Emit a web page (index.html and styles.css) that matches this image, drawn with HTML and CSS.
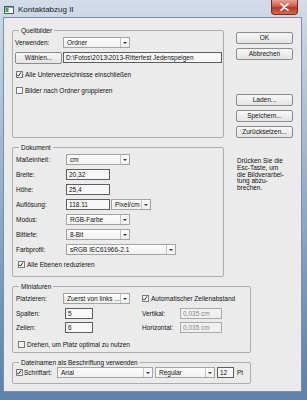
FILE: index.html
```html
<!DOCTYPE html>
<html lang="de">
<head>
<meta charset="utf-8">
<title>Kontaktabzug II</title>
<link rel="stylesheet" href="styles.css">
</head>
<body>
<div class="window">
  <div class="titlebar">
    <svg class="appicon" width="10" height="8" viewBox="0 0 10 8">
      <rect x="0.5" y="0.5" width="9" height="7" fill="#f4f6f4" stroke="#4a5a55"/>
      <rect x="1.5" y="2" width="3" height="4" fill="#3aa35a"/>
      <rect x="1" y="1" width="8" height="1" fill="#8aa0b8"/>
    </svg>
    <span class="title">Kontaktabzug II</span>
    <div class="closebtn">
      <svg width="9" height="8" viewBox="0 0 9 8"><path d="M1.2 0.8 L7.8 7.2 M7.8 0.8 L1.2 7.2" stroke="#fff" stroke-width="1.8" stroke-linecap="round"/></svg>
    </div>
  </div>
  <div class="client">
    <div class="top">
      <div class="leftcol">
        <fieldset class="grp g-quell">
          <legend>Quellbilder</legend>
          <div class="gbody">
            <div class="row">
              <span class="lbl w48">Verwenden:</span>
              <div class="select w67"><span class="val">Ordner</span><span class="arrow"></span></div>
            </div>
            <div class="row mt4">
              <div class="btn w47">Wählen...</div>
              <div class="input path">D:\Fotos\2013\2013-Ritterfest Jedenspeigen</div>
            </div>
            <div class="row mt6 ind1">
              <span class="cb on"><svg width="7" height="7" viewBox="0 0 7 7"><path d="M1.2 3.6 L2.8 5.4 L5.9 1" fill="none" stroke="#222" stroke-width="1.1"/></svg></span>
              <span class="cbtext">Alle Unterverzeichnisse einschließen</span>
            </div>
            <div class="row mt5 ind1">
              <span class="cb"></span>
              <span class="cbtext">Bilder nach Ordner gruppieren</span>
            </div>
          </div>
        </fieldset>
        <fieldset class="grp g-doc">
          <legend>Dokument</legend>
          <div class="gbody doc">
            <div class="row"><span class="lbl w50">Maßeinheit:</span><div class="select w64"><span class="val">cm</span><span class="arrow"></span></div></div>
            <div class="row"><span class="lbl w50">Breite:</span><div class="input w44">20,32</div></div>
            <div class="row"><span class="lbl w50">Höhe:</span><div class="input w44">25,4</div></div>
            <div class="row"><span class="lbl w50">Auflösung:</span><div class="input w44">118.11</div><div class="select w40 ml1"><span class="val">Pixel/cm</span><span class="arrow"></span></div></div>
            <div class="row"><span class="lbl w50">Modus:</span><div class="select w64"><span class="val">RGB-Farbe</span><span class="arrow"></span></div></div>
            <div class="row"><span class="lbl w50">Bittiefe:</span><div class="select w64"><span class="val">8-Bit</span><span class="arrow"></span></div></div>
            <div class="row"><span class="lbl w50">Farbprofil:</span><div class="select w110"><span class="val">sRGB IEC61966-2.1</span><span class="arrow"></span></div></div>
            <div class="row ind2">
              <span class="cb on"><svg width="7" height="7" viewBox="0 0 7 7"><path d="M1.2 3.6 L2.8 5.4 L5.9 1" fill="none" stroke="#222" stroke-width="1.1"/></svg></span>
              <span class="cbtext">Alle Ebenen reduzieren</span>
            </div>
          </div>
        </fieldset>
      </div>
      <div class="rightcol">
        <div class="btn">OK</div>
        <div class="btn mt4">Abbrechen</div>
        <div class="btn mt34">Laden...</div>
        <div class="btn mt4">Speichern...</div>
        <div class="btn mt4">Zurücksetzen...</div>
        <p class="hint">Drücken Sie die<br>Esc-Taste, um<br>die Bildverarbei-<br>tung abzu-<br>brechen.</p>
      </div>
    </div>
    <fieldset class="grp g-mini">
      <legend>Miniaturen</legend>
      <div class="gbody">
        <div class="row">
          <div class="lpart"><span class="lbl w47">Platzieren:</span><div class="select w67"><span class="val">Zuerst von links ...</span><span class="arrow"></span></div></div>
          <span class="cb on"><svg width="7" height="7" viewBox="0 0 7 7"><path d="M1.2 3.6 L2.8 5.4 L5.9 1" fill="none" stroke="#222" stroke-width="1.1"/></svg></span>
          <span class="cbtext">Automatischer Zeilenabstand</span>
        </div>
        <div class="row mt4">
          <div class="lpart"><span class="lbl w49">Spalten:</span><div class="input w28">5</div></div>
          <span class="lbl w38">Vertikal:</span><div class="input dis w42">0,035 cm</div>
        </div>
        <div class="row mt3">
          <div class="lpart"><span class="lbl w49">Zeilen:</span><div class="input w28">6</div></div>
          <span class="lbl w38">Horizontal:</span><div class="input dis w42">0,035 cm</div>
        </div>
        <div class="row mt6 ind2">
          <span class="cb"></span>
          <span class="cbtext">Drehen, um Platz optimal zu nutzen</span>
        </div>
      </div>
    </fieldset>
    <fieldset class="grp g-name">
      <legend>Dateinamen als Beschriftung verwenden</legend>
      <div class="gbody">
        <div class="row">
          <span class="cb on"><svg width="7" height="7" viewBox="0 0 7 7"><path d="M1.2 3.6 L2.8 5.4 L5.9 1" fill="none" stroke="#222" stroke-width="1.1"/></svg></span>
          <span class="lbl w33">Schriftart:</span>
          <div class="select w96"><span class="val">Arial</span><span class="arrow"></span></div>
          <div class="select w60 ml2"><span class="val">Regular</span><span class="arrow"></span></div>
          <div class="input w17 ml2">12</div>
          <span class="pt">Pt</span>
        </div>
      </div>
    </fieldset>
  </div>
</div>
</body>
</html>
```
FILE: styles.css
```css
* { box-sizing: border-box; }
html, body { margin: 0; padding: 0; }
body {
  width: 307px;
  height: 400px;
  overflow: hidden;
  font-family: "Liberation Sans", Arial, sans-serif;
  font-size: 6.5px;
  color: #111;
}
.window {
  width: 307px;
  height: 400px;
  display: flex;
  flex-direction: column;
  padding: 0 5px 8px 3px;
  background: linear-gradient(to bottom, #d3dde9 0, #c3d1e1 40px, #9fb5cf 160px, #7495bd 300px, #5d80ad 400px);
}
.titlebar {
  height: 17px;
  flex: none;
  display: flex;
  align-items: center;
}
.appicon { margin-left: 1px; margin-top: 2px; }
.title {
  margin-left: 4px;
  margin-top: 2px;
  font-size: 8px;
  color: #1a1a1a;
}
.closebtn {
  margin-left: auto;
  margin-right: 4px;
  align-self: flex-start;
  width: 27px;
  height: 15px;
  border: 1px solid #7a2a22;
  border-top: none;
  border-radius: 0 0 4px 4px;
  background: linear-gradient(to bottom, #e8a093 0, #d45a45 45%, #c0321e 55%, #d86a4c 100%);
  display: flex;
  align-items: center;
  justify-content: center;
}
.client {
  flex: 1;
  background: #ebebeb;
  border: 1px solid #7b8ea6;
  padding: 8px 0 0 8px;
}
.top {
  display: flex;
  align-items: flex-start;
  gap: 12px;
}
.leftcol {
  width: 212px;
  display: flex;
  flex-direction: column;
  gap: 5px;
}
fieldset.grp {
  margin: 0;
  padding: 0;
  min-width: 0;
  border: 1px solid #adadad;
  border-radius: 2px;
}
legend {
  height: 9px;
  line-height: 9px;
  padding: 0 2px;
  margin-left: 6px;
}
.g-quell { height: 112px; }
.g-doc { height: 134px; }
.g-mini { width: 239px; height: 71px; margin-top: 5px !important; }
.g-name { width: 239px; height: 26px; margin-top: 5px !important; }
.gbody {
  display: flex;
  flex-direction: column;
  padding: 2px 1px 0 2px;
}
.gbody.doc { padding-left: 3px; gap: 4px; }
.g-mini .gbody { padding-left: 3px; }
.g-name .gbody { padding: 0 0 0 3px; }
.row {
  display: flex;
  align-items: center;
  height: 11px;
}
.mt3 { margin-top: 3px; }
.mt4 { margin-top: 4px; }
.mt5 { margin-top: 5px; }
.mt6 { margin-top: 6px; }
.mt34 { margin-top: 34px; }
.ml1 { margin-left: 1px; }
.ml2 { margin-left: 2px; }
.ind1 { padding-left: 1px; }
.ind2 { padding-left: 2px; }
.lbl { flex: none; white-space: nowrap; }
.w17 { width: 17px; }
.w28 { width: 28px; }
.w33 { width: 33px; }
.w38 { width: 38px; }
.w40 { width: 40px; }
.w42 { width: 42px; }
.w44 { width: 44px; }
.w47 { width: 47px; }
.w48 { width: 48px; }
.w49 { width: 49px; }
.w50 { width: 50px; }
.w60 { width: 60px; }
.w64 { width: 64px; }
.w67 { width: 67px; }
.w96 { width: 96px; }
.w110 { width: 110px; }
.lpart {
  width: 126px;
  display: flex;
  align-items: center;
  flex: none;
}
.select {
  flex: none;
  height: 11px;
  display: flex;
  align-items: stretch;
  border: 1px solid #a3a3a3;
  background: linear-gradient(to bottom, #fdfdfd, #f1f1f1);
}
.select .val {
  flex: 1;
  padding-left: 3px;
  line-height: 9px;
  white-space: nowrap;
  overflow: hidden;
}
.select .arrow {
  width: 9px;
  border-left: 1px solid #c4c4c4;
  display: flex;
  align-items: center;
  justify-content: center;
}
.select .arrow::after {
  content: "";
  border-left: 2px solid transparent;
  border-right: 2px solid transparent;
  border-top: 2px solid #333;
}
.input {
  flex: none;
  height: 11px;
  border: 1px solid #5e5e5e;
  background: #f7f7f7;
  padding-left: 2px;
  line-height: 9px;
  white-space: nowrap;
  overflow: hidden;
}
.input.path { width: 159px; margin-left: 1px; }
.input.dis { border-color: #a9a9a9; color: #8a8a8a; background: #f0f0f0; }
.btn {
  flex: none;
  height: 12px;
  border: 1px solid #8b8b8b;
  border-radius: 2px;
  background: linear-gradient(to bottom, #f7f7f7, #e4e4e4);
  text-align: center;
  line-height: 10px;
  white-space: nowrap;
}
.rightcol {
  width: 57px;
  display: flex;
  flex-direction: column;
  margin-top: 6px;
}
.hint {
  margin: 20px 0 0 1px;
  line-height: 6.75px;
  white-space: nowrap;
}
.cb {
  flex: none;
  width: 7px;
  height: 7px;
  border: 1px solid #7c7c7c;
  background: #fafafa;
  display: flex;
}
.cb svg { margin: -1px 0 0 -1px; }
.cbtext { margin-left: 2px; white-space: nowrap; }
.g-name .cb + .lbl { margin-left: 1px; }
.pt { margin-left: 3px; }
```
